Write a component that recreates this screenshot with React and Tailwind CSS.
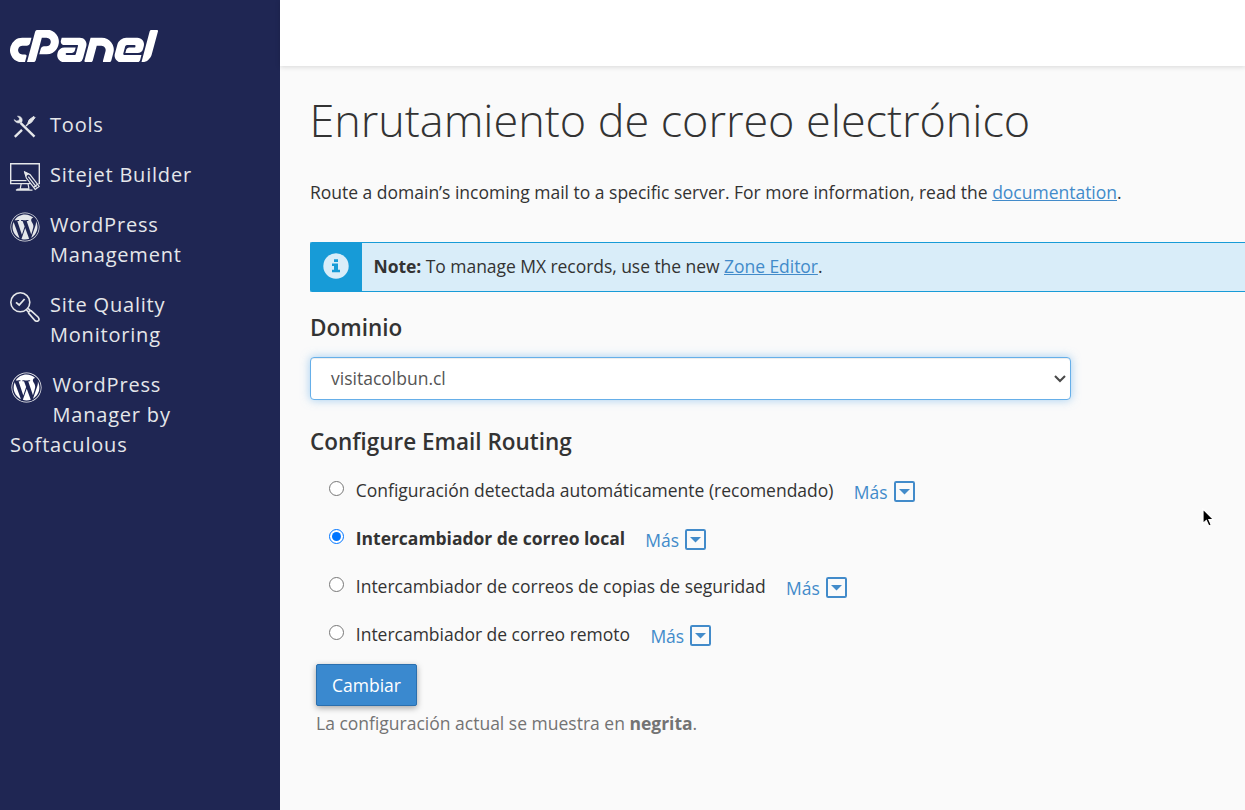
import { SiCpanel } from "react-icons/si";
import { FaWordpress } from "react-icons/fa";

function ToolsIcon() {
  return (
    <svg width="30" height="30" viewBox="0 0 30 30" fill="none" stroke="currentColor">
      <path d="M10.5 10.8 24.5 24.6" strokeWidth="2.4" />
      <path d="M4.8 24.8 12 17.8" strokeWidth="2.4" />
      <path d="M16 14 19 11" strokeWidth="1.4" />
      <path d="M7.4 4.2 C11 3.8 13 6.6 12 9.8 C9.6 12 5 11.2 4.1 7.6 L6.6 9 9 8.4 9.5 6.2 Z" fill="currentColor" strokeWidth=".5" />
      <path d="M17.8 11.2 19.2 7.8 23.8 4.4 25 5.6 21.4 10.4 18.6 12 Z" fill="currentColor" strokeWidth="1" />
    </svg>
  );
}

function SitejetIcon() {
  return (
    <svg width="30" height="30" viewBox="0 0 30 30" fill="none" stroke="currentColor" strokeWidth="1.2">
      <path d="M20.5 21.6H.7V1.7H29.3V21.6H28.4" strokeWidth="1.4" />
      <path d="M.7 18.6H16.5" />
      <path d="M11.2 21.6 10.2 26.8M18 21.6 19 26.8M6 28.2H22.5M6 28.2Q6.8 26.8 10 26.8H19.5" />
      <path d="M14.8 10.2 16.4 16 25.2 27.4 29.2 24.4 20 12.6Z" />
      <path d="M18.3 14.6 26.6 25.4M23.8 25.2 27.6 22.2" />
      <path d="M14.8 10.2 15.8 13.6 18 11.8Z" fill="currentColor" />
    </svg>
  );
}

function QualityIcon() {
  return (
    <svg width="30" height="30" viewBox="0 0 30 30" fill="none" stroke="currentColor" strokeWidth="1.6">
      <circle cx="10.3" cy="10.3" r="9.5" />
      <path d="M6 10.4 9.2 13 14.6 7" strokeWidth="1.8" />
      <path d="M16.3 17.8 19 20.6M18 16.3 20.8 18.8" />
      <path d="M18.7 21.3C18.3 19.6 19.5 18.3 21.2 18.8L28 25C30.4 27.8 28 30.4 25.2 28.8Z" />
    </svg>
  );
}

function InfoIcon() {
  return (
    <svg width="26" height="26" viewBox="0 0 26 26">
      <circle cx="13" cy="13" r="12.7" fill="currentColor" />
      <path d="M11 6.3H15V9H11ZM9 10.6H15V16.8H17V19.2H9V16.8H11V13H9Z" fill="#179bd7" />
    </svg>
  );
}

function CaretBox() {
  return (
    <svg width="21" height="21" viewBox="0 0 21 21">
      <rect x="1" y="1" width="19" height="19" rx="1.2" fill="none" stroke="currentColor" strokeWidth="2" />
      <path d="M5 8H16L10.5 13.6Z" fill="currentColor" />
    </svg>
  );
}

const routes = [
  { label: "Configuración detectada automáticamente (recomendado)" },
  { label: "Intercambiador de correo local", active: true },
  { label: "Intercambiador de correos de copias de seguridad" },
  { label: "Intercambiador de correo remoto" },
];

function NavItem({ icon, children }) {
  return (
    <a className="flex items-start gap-[10px]">
      <span className="mt-[2px] -mb-[2px] flex h-[30px] w-[30px] shrink-0">{icon}</span>
      <span>{children}</span>
    </a>
  );
}

export default function App() {
  return (
    <div className="relative flex h-[810px] w-[1245px] overflow-hidden bg-[#fafafa] font-['Open_Sans',sans-serif] text-[17.5px] leading-[25px] text-[#333]">
      <aside className="w-[280px] shrink-0 bg-[#1f2653] pl-[10px] text-[#e5e7ea]">
        <div className="mt-[30px] flex h-[32px] w-[148px] items-center justify-center overflow-hidden text-white">
          <SiCpanel size={148} className="shrink-0" />
        </div>
        <nav className="mt-[48px] flex flex-col gap-5 text-[20px] leading-[30px] tracking-[0.8px]">
          <NavItem icon={<ToolsIcon />}>Tools</NavItem>
          <NavItem icon={<SitejetIcon />}>Sitejet Builder</NavItem>
          <NavItem icon={<FaWordpress size={30} />}>
            WordPress<br />Management
          </NavItem>
          <NavItem icon={<QualityIcon />}>
            Site Quality<br />Monitoring
          </NavItem>
          <a>
            <span className="flex items-start">
              <FaWordpress size={31} className="mt-[2px] mr-[11px] ml-[0.5px] shrink-0 text-white" />
              <span>WordPress<br />Manager by</span>
            </span>
            Softaculous
          </a>
        </nav>
      </aside>

      <div className="flex min-w-0 flex-1 flex-col">
        <header className="h-[66px] shrink-0 bg-white shadow-[0_1px_5px_rgba(0,0,0,0.14)]" />
        <main className="flex flex-col pl-[30px]">
          <h1 className="mt-[29px] -ml-[0.5px] text-[45px] leading-[50px] font-light tracking-[-0.04px] whitespace-nowrap">
            Enrutamiento de correo electrónico
          </h1>
          <p className="mt-[35px] tracking-[-0.01px] whitespace-nowrap">
            Route a domain’s incoming mail to a specific server. For more information, read the{" "}
            <a className="text-[#428bca] underline">documentation</a>.
          </p>
          <div className="mt-[37px] flex h-[50px] rounded-l-[2px] border border-r-0 border-[#179bd7] bg-[#d9edf9]">
            <div className="flex w-[51px] justify-center bg-[#179bd7] pt-[9.5px] pr-[1px] text-[#d9edf9]">
              <InfoIcon />
            </div>
            <p className="pt-[11px] pl-[11.5px] tracking-[-0.05px]">
              <b>Note:</b> To manage MX records, use the new{" "}
              <a className="text-[#428bca] underline">Zone Editor</a>.
            </p>
          </div>
          <h2 className="mt-[22px] text-[22.5px] leading-[28px] font-semibold">Dominio</h2>
          <div className="mt-[15px] flex h-[43px] w-[761px] items-center justify-between rounded-[4px] border border-[#66afe9] bg-white pr-[4px] pl-[20px] text-[#555] shadow-[inset_0_1px_1px_rgba(0,0,0,0.075),0_0_10px_rgba(102,175,233,0.6)]">
            <span>visitacolbun.cl</span>
            <svg width="12" height="9" viewBox="0 0 12 9" fill="none" stroke="#4a4a4a" strokeWidth="2.1">
              <path d="M1 2 6 7 11 2" />
            </svg>
          </div>
          <h2 className="mt-[28px] text-[22.5px] leading-[28px] font-semibold">Configure Email Routing</h2>
          <div className="mt-[22px] flex flex-col gap-[23px] pl-[19px]">
            {routes.map((route) => (
              <div key={route.label} className="flex h-[25px] items-start whitespace-nowrap">
                <input
                  type="radio"
                  name="routing"
                  defaultChecked={route.active}
                  className="m-0 mt-[3px] h-[15px] w-[15px] shrink-0"
                />
                <span className={route.active ? "ml-[11.8px] font-bold tracking-[-0.02px]" : "ml-[11.8px] tracking-[-0.01px]"}>{route.label}</span>
                <a className="ml-[20.3px] flex gap-[6px] text-[#428bca]">
                  <span className="pt-[2px]">Más</span>
                  <span className="pt-[3px]"><CaretBox /></span>
                </a>
              </div>
            ))}
          </div>
          <button className="mt-[17px] ml-[6px] h-[42px] w-[101px] rounded-[2px] border border-[#2a6fae] bg-[#3a89cf] text-white shadow-[0_2px_6px_rgba(0,0,0,0.35)]">
            Cambiar
          </button>
          <p className="mt-[5px] ml-[6px] text-[#737373]">
            La configuración actual se muestra en <b>negrita</b>.
          </p>
        </main>
      </div>

      <svg className="absolute top-[508px] left-[1202px]" width="14" height="20" viewBox="0 0 14 20">
        <path d="M1 1V15.5L4.3 12.4 6.8 18 9.3 16.9 6.9 11.6H11.5Z" fill="#000" stroke="#fff" strokeWidth="1.2" />
      </svg>
    </div>
  );
}
